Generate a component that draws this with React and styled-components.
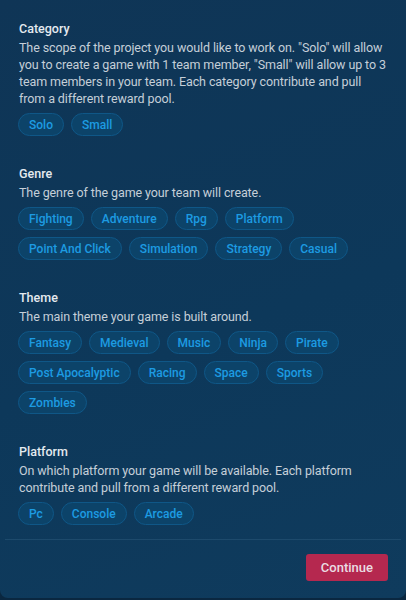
import React from 'react'
import styled, { createGlobalStyle } from 'styled-components'

const GlobalStyle = createGlobalStyle`
  html, body {
    margin: 0;
    padding: 0;
    background: #0a2740;
  }
  body {
    font-family: Roboto, "Noto Sans", sans-serif;
  }
`

const Panel = styled.div`
  width: 406px;
  height: 598px;
  box-sizing: border-box;
  background: linear-gradient(160deg, #0f3556 0%, #0d385a 55%, #0f3b5d 100%);
  border-radius: 0 0 8px 8px;
  display: flex;
  flex-direction: column;
`

const Body = styled.div`
  padding: 20px 19px 0 18px;
  display: flex;
  flex-direction: column;
  gap: 29px;
`

const Section = styled.section`
  display: flex;
  flex-direction: column;
`

const Title = styled.h3`
  margin: 0 0 2px 1px;
  font-size: 12.5px;
  font-weight: 500;
  color: #e4eaef;
  line-height: 17px;
`

const Desc = styled.p`
  margin: 0 0 6px 1px;
  font-size: 12.5px;
  line-height: 17px;
  color: #c5cfd8;
  letter-spacing: -0.1px;
`

const Chips = styled.div`
  display: flex;
  flex-wrap: wrap;
  gap: 7px;
`

const Chip = styled.button`
  font-family: inherit;
  height: 23px;
  padding: 0 10px;
  border-radius: 12px;
  border: 1px solid #0f5787;
  background: #0c4369;
  color: #1d9be2;
  font-size: 12px;
  font-weight: 500;
  cursor: pointer;
`

const Divider = styled.hr`
  margin: 14px 5px 0;
  border: 0;
  border-top: 1px solid #1d4a6c;
`

const Footer = styled.div`
  display: flex;
  justify-content: flex-end;
  padding: 14px 18px 0;
`

const Button = styled.button`
  font-family: inherit;
  height: 27px;
  padding: 0 15px;
  border: 0;
  border-radius: 3px;
  background: #b5284f;
  color: #eadde3;
  font-size: 13px;
  font-weight: 500;
`

const sections = [
  {
    title: 'Category',
    desc: 'The scope of the project you would like to work on. "Solo" will allow you to create a game with 1 team member, "Small" will allow up to 3 team members in your team. Each category contribute and pull from a different reward pool.',
    items: ['Solo', 'Small'],
  },
  {
    title: 'Genre',
    desc: 'The genre of the game your team will create.',
    items: ['Fighting', 'Adventure', 'Rpg', 'Platform', 'Point And Click', 'Simulation', 'Strategy', 'Casual'],
  },
  {
    title: 'Theme',
    desc: 'The main theme your game is built around.',
    items: ['Fantasy', 'Medieval', 'Music', 'Ninja', 'Pirate', 'Post Apocalyptic', 'Racing', 'Space', 'Sports', 'Zombies'],
  },
  {
    title: 'Platform',
    desc: 'On which platform your game will be available. Each platform contribute and pull from a different reward pool.',
    items: ['Pc', 'Console', 'Arcade'],
  },
]

export default function App() {
  return (
    <>
      <GlobalStyle />
      <Panel>
        <Body>
          {sections.map(s => (
            <Section key={s.title}>
              <Title>{s.title}</Title>
              <Desc>{s.desc}</Desc>
              <Chips>
                {s.items.map(i => <Chip key={i}>{i}</Chip>)}
              </Chips>
            </Section>
          ))}
        </Body>
        <Divider />
        <Footer>
          <Button>Continue</Button>
        </Footer>
      </Panel>
    </>
  )
}
